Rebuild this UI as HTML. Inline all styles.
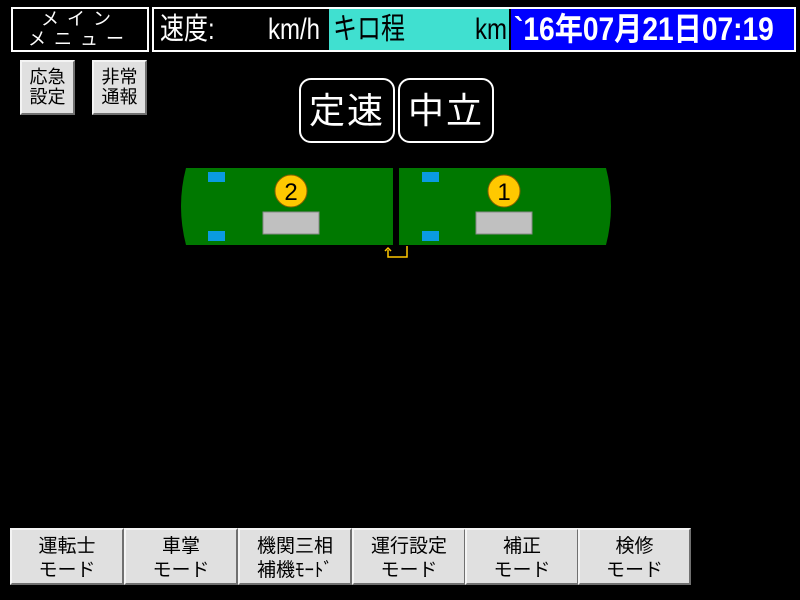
<!DOCTYPE html>
<html><head><meta charset="utf-8"><style>
body{margin:0;width:800px;height:600px;background:#000;position:relative;overflow:hidden;font-family:"Liberation Sans","Noto Sans CJK JP",sans-serif;}
.a{position:absolute;box-sizing:border-box;}
.btn{background:#e0e0e0;border:2px solid;border-color:#f4f4f4 #707070 #707070 #f4f4f4;color:#000;text-align:center;font-size:17px;line-height:20px;}
.bb{top:528px;height:57px;width:114px;padding-top:5px;font-size:19px;line-height:24px;}
.c{display:inline-block;transform:scaleX(0.8);transform-origin:left center;}
</style></head><body>
<div class="a" style="left:11px;top:7px;width:138px;height:45px;border:2px solid #fff;color:#fff;text-align:center;font-size:18px;line-height:20px;padding-top:0px;letter-spacing:8px">メイン<br>メニュー</div>
<div class="a" style="left:152px;top:7px;width:644px;height:45px;border:2px solid #fff;"></div>
<div class="a" style="left:154px;top:9px;width:174px;height:41px;color:#fff;font-size:30px;line-height:41px;padding-left:6px"><span class="c">速度:</span><span class="c" style="position:absolute;left:114px">km/h</span></div>
<div class="a" style="left:329px;top:9px;width:180px;height:41px;background:#40e0d0;color:#000;font-size:30px;line-height:41px;padding-left:4px"><span class="c">キロ程</span><span class="c" style="position:absolute;left:146px">km</span></div>
<div class="a" style="left:511px;top:9px;width:283px;height:41px;background:#0000ff;color:#fff;font-size:32px;font-weight:bold;line-height:41px;padding-left:3px;white-space:nowrap"><span class="c" style="transform:scaleX(0.88)">`16年07月21日07:19</span></div>
<div class="a btn" style="left:20px;top:60px;width:55px;height:55px;padding-top:5px;font-size:18px">応急<br>設定</div>
<div class="a btn" style="left:92px;top:60px;width:55px;height:55px;padding-top:5px;font-size:18px">非常<br>通報</div>
<div class="a" style="left:299px;top:78px;width:96px;height:65px;border:2px solid #fff;border-radius:12px;color:#fff;font-size:36px;line-height:61px;text-align:center;letter-spacing:2px">定速</div>
<div class="a" style="left:398px;top:78px;width:96px;height:65px;border:2px solid #fff;border-radius:12px;color:#fff;font-size:36px;line-height:61px;text-align:center;letter-spacing:2px">中立</div>
<svg class="a" style="left:0;top:0" width="800" height="600">
<path d="M186 168 H393 V245 H186 Q176 206 186 168Z" fill="#007800"/>
<path d="M399 168 H606 Q616 206 606 245 H399Z" fill="#007800"/>
<rect x="208" y="172" width="17" height="10" fill="#0a9be0"/>
<rect x="208" y="231" width="17" height="10" fill="#0a9be0"/>
<rect x="422" y="172" width="17" height="10" fill="#0a9be0"/>
<rect x="422" y="231" width="17" height="10" fill="#0a9be0"/>
<rect x="263" y="212" width="56" height="22" fill="#c0c0c0" stroke="#888"/>
<rect x="476" y="212" width="56" height="22" fill="#c0c0c0" stroke="#888"/>
<circle cx="291" cy="191" r="16" fill="#ffc800" stroke="#8a6000"/>
<circle cx="504" cy="191" r="16" fill="#ffc800" stroke="#8a6000"/>
<text x="291" y="200" font-size="24" text-anchor="middle" font-family="Liberation Sans">2</text>
<text x="504" y="200" font-size="24" text-anchor="middle" font-family="Liberation Sans">1</text>
<path d="M407 246 V257 H388 V250 M385 251 L388 248 L391 251" stroke="#ffc800" stroke-width="1.5" fill="none"/>
</svg>
<div class="a btn bb" style="left:10px">運転士<br>モード</div>
<div class="a btn bb" style="left:124px">車掌<br>モード</div>
<div class="a btn bb" style="left:238px">機関三相<br>補機ﾓｰﾄﾞ</div>
<div class="a btn bb" style="left:352px">運行設定<br>モード</div>
<div class="a btn bb" style="left:465px">補正<br>モード</div>
<div class="a btn bb" style="left:578px;width:113px">検修<br>モード</div>
</body></html>
